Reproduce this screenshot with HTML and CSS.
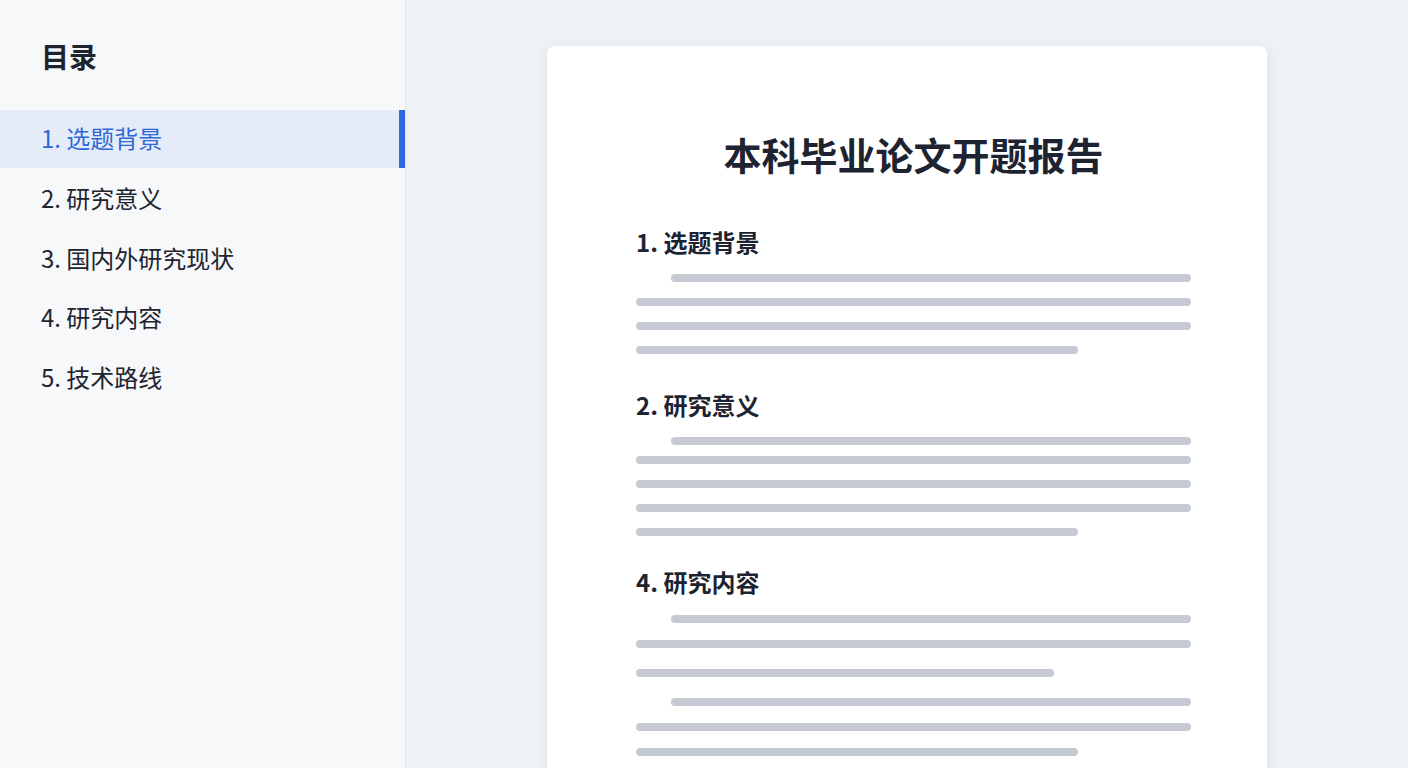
FILE: index.html
```html
<!DOCTYPE html>
<html lang="zh-CN">
<head>
<meta charset="utf-8">
<title>本科毕业论文开题报告</title>
<link rel="stylesheet" href="styles.css">
</head>
<body>
<div class="app">
  <aside class="sidebar">
    <h2 class="toc-title">目录</h2>
    <nav class="toc">
      <a class="toc-item active">1. 选题背景</a>
      <a class="toc-item">2. 研究意义</a>
      <a class="toc-item">3. 国内外研究现状</a>
      <a class="toc-item">4. 研究内容</a>
      <a class="toc-item">5. 技术路线</a>
    </nav>
  </aside>
  <main class="main">
    <article class="paper">
      <h1 class="paper-title">本科毕业论文开题报告</h1>

      <section class="sec sec-1">
        <h3 class="sec-title">1. 选题背景</h3>
        <div class="line indent"></div>
        <div class="line"></div>
        <div class="line"></div>
        <div class="line short"></div>
      </section>

      <section class="sec sec-2">
        <h3 class="sec-title">2. 研究意义</h3>
        <div class="line indent"></div>
        <div class="line tight"></div>
        <div class="line"></div>
        <div class="line"></div>
        <div class="line short"></div>
      </section>

      <section class="sec sec-4">
        <h3 class="sec-title">4. 研究内容</h3>
        <div class="line indent"></div>
        <div class="line"></div>
        <div class="line shorter wide"></div>
        <div class="line indent wide"></div>
        <div class="line"></div>
        <div class="line short"></div>
      </section>
    </article>
  </main>
</div>
</body>
</html>
```

FILE: styles.css
```css
* { box-sizing: border-box; }
html, body {
  margin: 0;
  height: 768px;
  overflow: hidden;
}
body {
  font-family: "Noto Sans CJK SC", "Noto Sans", sans-serif;
  color: #1d2330;
  background: #eef1f5;
}
.app {
  display: flex;
  height: 768px;
}
.sidebar {
  width: 406px;
  flex: 0 0 406px;
  background: #f6f8fa;
  border-right: 1px solid #e3e7ed;
  padding-top: 36px;
}
.toc-title {
  margin: 0 0 34px 41px;
  font-size: 28px;
  line-height: 40px;
  font-weight: 700;
  color: #1d2330;
}
.toc {
  display: flex;
  flex-direction: column;
}
.toc-item {
  display: flex;
  align-items: center;
  height: 59.5px;
  padding-left: 41px;
  padding-bottom: 3px;
  font-size: 24px;
  color: #1f2430;
  text-decoration: none;
}
.toc-item.active {
  height: 58px;
  margin-bottom: 1.5px;
  background: #e4ecfa;
  color: #2f68d6;
  border-right: 6px solid #2f6ae0;
}
.main {
  flex: 1;
  display: flex;
  justify-content: center;
  padding-top: 46px;
  overflow: hidden;
}
.paper {
  width: 720px;
  min-height: 800px;
  background: #ffffff;
  border-radius: 8px;
  box-shadow: 0 2px 14px rgba(30, 45, 70, 0.07);
  padding: 82px 76px 0 89px;
  display: flex;
  flex-direction: column;
}
.paper-title {
  margin: 0;
  text-align: center;
  font-size: 38px;
  line-height: 52px;
  font-weight: 700;
  color: #1d2330;
}
.sec {
  display: flex;
  flex-direction: column;
}
.sec-1 { margin-top: 46px; }
.sec-2 { margin-top: 35px; }
.sec-4 { margin-top: 30px; }
.sec-title {
  margin: 0 0 16px;
  font-size: 24px;
  line-height: 32px;
  font-weight: 700;
  color: #1d2330;
}
.sec-title.h4 { margin-bottom: 17px; }
.line {
  height: 8px;
  border-radius: 4px;
  background: #c5cad3;
  margin-top: 16px;
}
.sec-title + .line { margin-top: 0; }
.sec-4 .sec-title { margin-bottom: 17px; }
.sec-4 .line { margin-top: 17px; }
.sec-4 .sec-title + .line { margin-top: 0; }
.line.indent { margin-left: 35px; }
.line.short { width: 442px; }
.line.shorter { width: 418px; }
.line.tight { margin-top: 11px; }
.sec-4 .line.wide { margin-top: 21px; }
```
